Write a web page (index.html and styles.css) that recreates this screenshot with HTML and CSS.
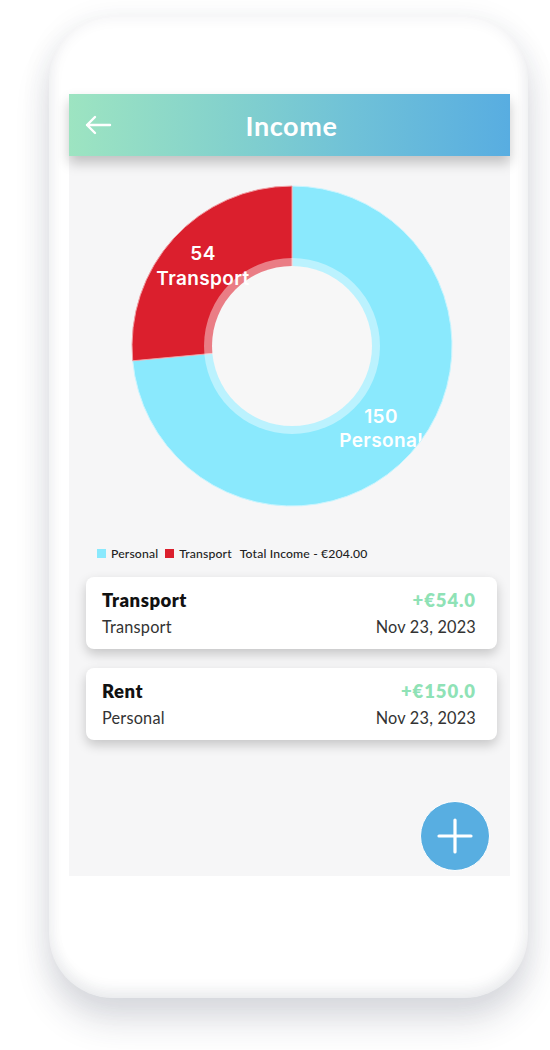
FILE: index.html
```html
<!DOCTYPE html>
<html lang="en">
<head>
<meta charset="utf-8">
<title>Income</title>
<link rel="stylesheet" href="styles.css">
</head>
<body>
<div class="phone">
  <div class="screen">
    <header class="appbar">
      <svg class="back" width="28" height="20" viewBox="0 0 28 20">
        <path d="M26 10H3M11 2L3 10l8 8" fill="none" stroke="#fff" stroke-width="2.4" stroke-linecap="round" stroke-linejoin="round"/>
      </svg>
      <h1 class="title">Income</h1>
    </header>
    <main class="content">
      <div class="chart">
        <svg width="322" height="322" viewBox="0 0 322 322">
          <defs>
            <clipPath id="disc"><circle cx="161" cy="161" r="160"/></clipPath>
          </defs>
          <path d="M161 161L161 1A160 160 0 1 1 1.7 175.8Z" fill="#8ae9fd" stroke="#c9f5ff" stroke-width="1"/>
          <path d="M161 161L161 1A160 160 0 0 0 1.7 175.8Z" fill="#db1f2d" stroke="#f0a0a5" stroke-width="1"/>
          <circle cx="161" cy="161" r="88" fill="#ffffff" fill-opacity="0.42"/>
          <circle cx="161" cy="161" r="80" fill="#f7f7f7"/>
          <g class="slice-label" clip-path="url(#disc)">
            <text x="72" y="75">54</text>
            <text x="72" y="100">Transport</text>
            <text x="250" y="238">150</text>
            <text x="250" y="262">Personal</text>
          </g>
        </svg>
      </div>
      <div class="legend">
        <span class="swatch swatch-personal"></span><span class="legend-text">Personal</span>
        <span class="swatch swatch-transport"></span><span class="legend-text">Transport</span>
        <span class="legend-total">Total Income - €204.00</span>
      </div>
      <ul class="list">
        <li class="card">
          <div class="row">
            <span class="name">Transport</span>
            <span class="amount">+€54.0</span>
          </div>
          <div class="row row-sub">
            <span class="cat">Transport</span>
            <span class="date">Nov 23, 2023</span>
          </div>
        </li>
        <li class="card">
          <div class="row">
            <span class="name">Rent</span>
            <span class="amount">+€150.0</span>
          </div>
          <div class="row row-sub">
            <span class="cat">Personal</span>
            <span class="date">Nov 23, 2023</span>
          </div>
        </li>
      </ul>
      <button class="fab" aria-label="Add">
        <svg width="36" height="36" viewBox="0 0 36 36">
          <path d="M18 2V34M2 18H34" stroke="#fff" stroke-width="3.2" stroke-linecap="round"/>
        </svg>
      </button>
    </main>
  </div>
</div>
</body>
</html>
```

FILE: styles.css
```css
html, body {
  margin: 0;
  padding: 0;
  background: #ffffff;
}

body {
  width: 550px;
  height: 1050px;
  overflow: hidden;
  font-family: "Lato", "Liberation Sans", sans-serif;
}

.phone {
  box-sizing: border-box;
  margin: 16px 0 0 49px;
  width: 479px;
  height: 982px;
  border-radius: 64px;
  background: #ffffff;
  padding: 78px 18px 0 20px;
  box-shadow:
    0 24px 34px rgba(40, 45, 75, 0.15),
    0 4px 30px rgba(40, 45, 75, 0.08),
    inset 0 -9px 14px rgba(40, 45, 75, 0.06),
    inset 0 0 16px rgba(40, 45, 75, 0.07);
}

.screen {
  width: 441px;
  height: 782px;
  display: flex;
  flex-direction: column;
}

.appbar {
  position: relative;
  z-index: 2;
  height: 62px;
  flex: none;
  display: flex;
  align-items: center;
  justify-content: center;
  background: linear-gradient(90deg, #9de4c1 0%, #84d2cc 35%, #6fc1d8 65%, #58ade1 100%);
  box-shadow: 0 7px 12px rgba(0, 0, 0, 0.22);
}

.back {
  position: absolute;
  left: 15px;
  top: 21px;
}

.title {
  margin: 0 0 0 4px;
  color: #ffffff;
  font-size: 27px;
  font-weight: 700;
  letter-spacing: 0.6px;
}

.content {
  position: relative;
  flex: 1;
  background: #f6f6f7;
  display: flex;
  flex-direction: column;
  padding-top: 29px;
}

.chart {
  margin-left: 62px;
  width: 322px;
  height: 322px;
}

.chart svg {
  display: block;
}

.slice-label text {
  fill: #ffffff;
  font-family: "Inter", "Roboto", sans-serif;
  font-weight: 600;
  font-size: 19px;
  letter-spacing: 0.4px;
  text-anchor: middle;
}

.legend {
  margin: 39px 0 0 28px;
  display: flex;
  align-items: center;
  height: 14px;
  font-size: 12.2px;
  font-weight: 500;
  letter-spacing: 0.15px;
  color: #222222;
}

.swatch {
  width: 9px;
  height: 9px;
  margin-right: 5px;
}

.swatch-personal { background: #8ae9fd; }
.swatch-transport { background: #db1f2d; }

.legend-text {
  margin-right: 7px;
}

.legend-total {
  margin-left: 1px;
}

.list {
  list-style: none;
  margin: 17px 13px 0 17px;
  padding: 0;
  display: flex;
  flex-direction: column;
  gap: 19px;
}

.card {
  background: #ffffff;
  border-radius: 8px;
  padding: 12px 21px 10px 16px;
  height: 72px;
  box-sizing: border-box;
  box-shadow: 0 5px 12px rgba(0, 0, 0, 0.2);
}

.row {
  display: flex;
  justify-content: space-between;
  align-items: baseline;
  line-height: 22px;
}

.row-sub {
  margin-top: 5px;
}

.name {
  font-size: 18.5px;
  font-weight: 800;
  letter-spacing: 0.5px;
  color: #111111;
}

.amount {
  font-size: 18.5px;
  font-weight: 800;
  letter-spacing: 0.9px;
  color: #8fe2b6;
}

.cat, .date {
  font-size: 16.3px;
  letter-spacing: 0.2px;
  color: #333333;
}

.fab {
  position: absolute;
  right: 20px;
  bottom: 5px;
  width: 70px;
  height: 70px;
  border-radius: 50%;
  border: 1.5px solid #ffffff;
  background: #58aee1;
  display: flex;
  align-items: center;
  justify-content: center;
  padding: 0;
}
```
